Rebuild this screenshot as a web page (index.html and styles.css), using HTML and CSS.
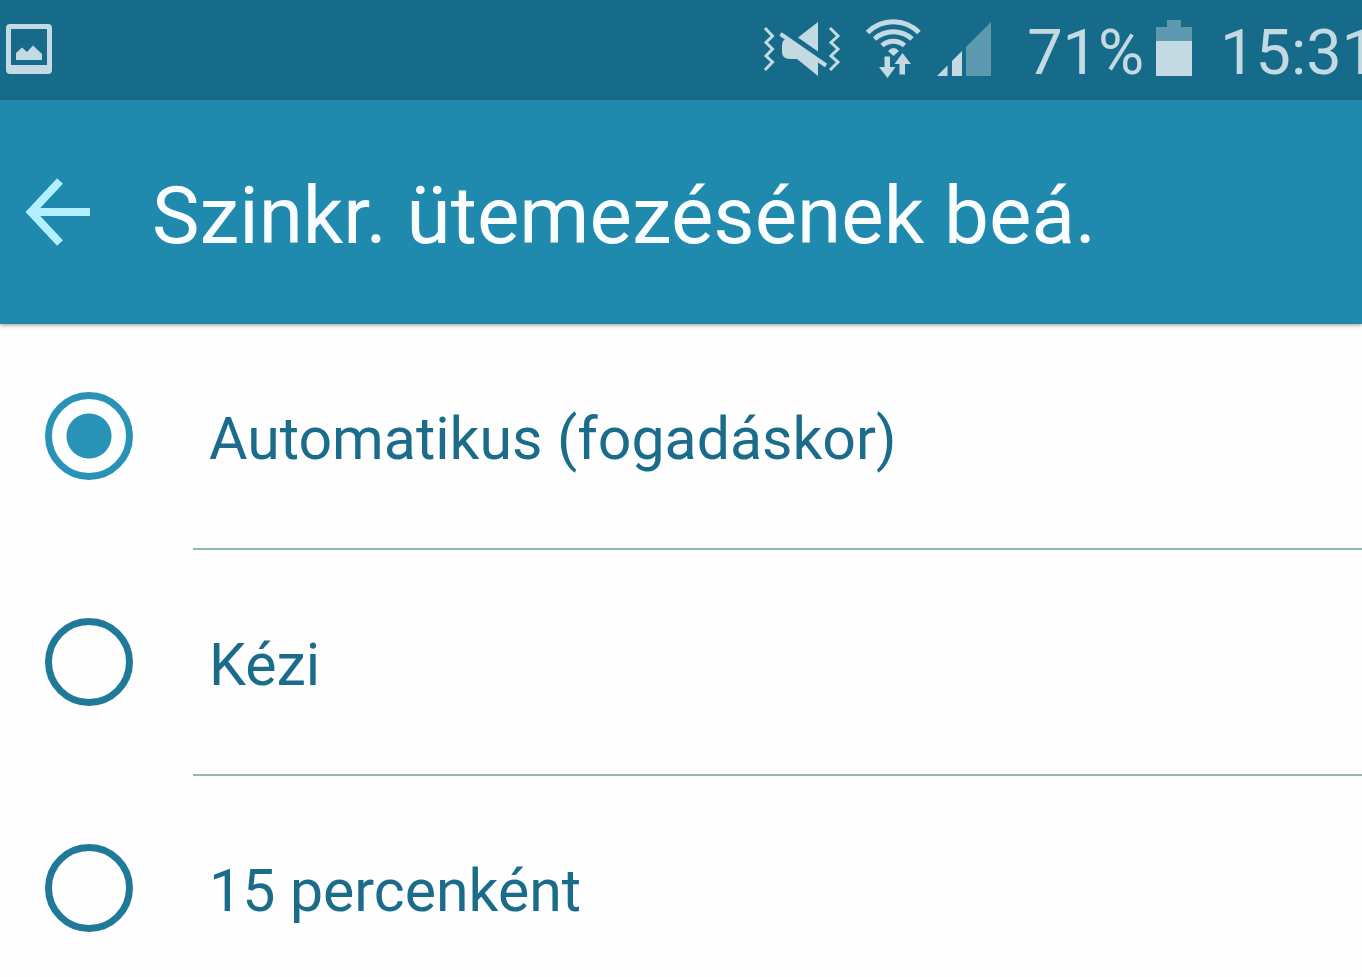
FILE: index.html
```html
<!DOCTYPE html>
<html lang="hu">
<head>
    <meta charset="UTF-8">
    <meta name="viewport" content="width=device-width, initial-scale=1.0">
    <title>Szinkr. ütemezésének beá.</title>
    <link rel="stylesheet" href="styles.css">
</head>
<body>
    <div class="status-bar">
        <svg class="icon-picture" width="46" height="50" viewBox="0 0 46 50" aria-hidden="true">
            <path fill-rule="evenodd" d="M4 0H42Q46 0 46 4V46Q46 50 42 50H4Q0 50 0 46V4Q0 0 4 0ZM5 5V41H41V5Z"/>
            <path d="M10 36V29L16 23.500L21 28L27 21.500L36 30V36Z"/>
        </svg>
        <div class="status-icons">
            <svg class="icon-mute" width="78" height="58" viewBox="0 0 78 58" aria-hidden="true">
                <path class="line" d="M2 8L9.500 16L3 22.500L9.500 29L3 36L9.500 42L2 50"/>
                <path class="line" d="M67 8L75 16L68 22.500L75 29L68 36L75 42L67 50"/>
                <path d="M55 2V31.500L35 17.500Z"/>
                <path d="M23 19L55 42V56L34 39H27Q19 39 19 32V26Q19 20 23 19Z"/>
                <path class="slash" d="M17.500 14L63 45.500"/>
            </svg>
            <svg class="icon-wifi" width="56" height="62" viewBox="0 0 56 62" aria-hidden="true">
                <path class="arc" d="M2.500 14.500A36 36 0 0 1 54 14.500"/>
                <path class="arc" d="M9.500 21A28 28 0 0 1 47 21"/>
                <path class="arc" d="M17 27.500A17 17 0 0 1 39.500 27.500"/>
                <path d="M23 33Q28.500 27 34 33L28.500 38Z"/>
                <path d="M19.500 38.500H25V49H30.500L22.500 60L14 49H19.500Z"/>
                <path d="M37.500 35L46 46H40V56.500H34.500V46H29.500Z"/>
            </svg>
            <svg class="icon-signal" width="54" height="54" viewBox="0 0 54 54" aria-hidden="true">
                <path d="M0 54L10.500 43.500V54Z"/>
                <path d="M15 54V39L25 29V54Z"/>
                <path class="dim" d="M29 54V25L54 0V54Z"/>
            </svg>
            <span class="battery-level">71%</span>
            <svg class="icon-battery" width="36" height="56" viewBox="0 0 36 56" aria-hidden="true">
                <path class="dim" d="M11 0H25V7H36V21H0V7H11Z"/>
                <path d="M0 21H36V56H0Z"/>
            </svg>
            <span class="clock">15:31</span>
        </div>
    </div>

    <header class="app-bar">
        <button class="back" type="button" aria-label="Vissza">
            <svg width="64" height="68" viewBox="0 0 64 68" aria-hidden="true">
                <path d="M34 3L5 34L34 65M5 34H64"/>
            </svg>
        </button>
        <h1>Szinkr. ütemezésének beá.</h1>
    </header>

    <form class="options">
        <div class="option">
            <input type="radio" id="auto" name="sync" value="auto" checked>
            <label for="auto">Automatikus (fogadáskor)</label>
        </div>
        <div class="option">
            <input type="radio" id="manual" name="sync" value="manual">
            <label for="manual">Kézi</label>
        </div>
        <div class="option">
            <input type="radio" id="min15" name="sync" value="15">
            <label for="min15">15 percenként</label>
        </div>
    </form>
</body>
</html>
```

FILE: styles.css
```css
* {
    box-sizing: border-box;
}
body {
    margin: 0;
    overflow: hidden;
    background: #fefefe;
    font-family: Roboto, "Open Sans", sans-serif;
}
svg {
    display: block;
    flex: none;
}

/* Status bar */
.status-bar {
    display: flex;
    justify-content: space-between;
    align-items: center;
    height: 100px;
    padding: 0 0 2px 6px;
    background: #176b8a;
    color: #c3dae3;
    font-size: 63px;
    white-space: nowrap;
}
.status-bar svg {
    fill: #c3dae3;
}
.status-bar .dim {
    fill: #5d99af;
}
.status-icons {
    display: flex;
    align-items: center;
    /* the clock runs off the right edge */
    margin-right: -15px;
}
.line, .slash, .arc {
    fill: none;
    stroke: #c3dae3;
    stroke-width: 3;
}
.slash {
    stroke-width: 4;
}
.arc {
    stroke-width: 5;
}
.icon-wifi {
    margin-left: 24px;
}
.icon-signal {
    margin-left: 16px;
}
.battery-level, .clock {
    padding-top: 6px;
}
.battery-level {
    margin-left: 36px;
}
.icon-battery {
    margin: 0 28px 2px 12px;
}

/* App bar */
.app-bar {
    position: relative;
    display: flex;
    align-items: center;
    height: 224px;
    padding-left: 26px;
    gap: 62px;
    background: #2089ae;
    box-shadow: 0 1px 4px rgba(60, 50, 30, 0.5);
}
.back {
    padding: 0;
    border: none;
    background: none;
    cursor: pointer;
}
.back path {
    fill: none;
    stroke: #b2f0ff;
    stroke-width: 8;
}
h1 {
    margin: 0;
    padding-top: 8px;
    color: #fafdfe;
    font-size: 80px;
    font-weight: 400;
    white-space: nowrap;
}

/* Options */
.option {
    display: flex;
    align-items: stretch;
    height: 226px;
    padding-left: 45px;
    gap: 60px;
}
.option input {
    appearance: none;
    flex: none;
    width: 88px;
    height: 88px;
    margin: 68px 0 0;
    border: 7px solid #21799a;
    border-radius: 50%;
    cursor: pointer;
}
.option input:checked {
    border-color: #2893b7;
    background: radial-gradient(circle, #2893b7 22px, transparent 23px);
}
.option label {
    flex: 1;
    display: flex;
    align-items: center;
    padding: 4px 0 0 16px;
    border-bottom: 2px solid #8db8b5;
    color: #1b6c8a;
    font-size: 59px;
    cursor: pointer;
}
```
